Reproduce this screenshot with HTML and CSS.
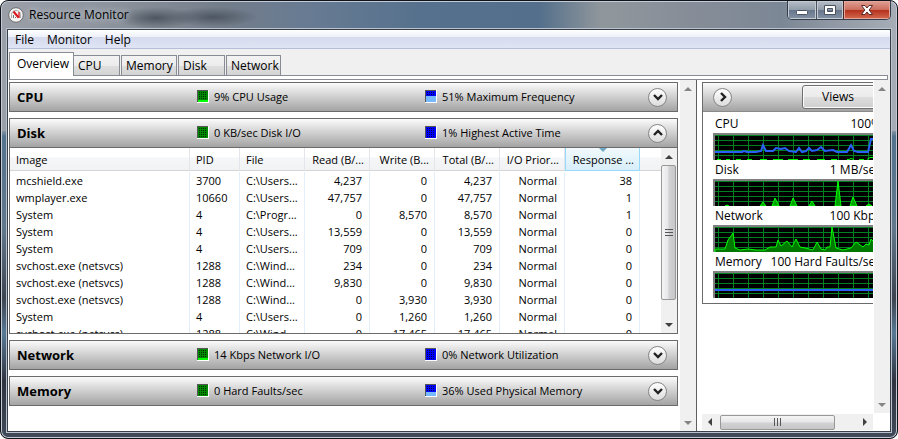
FILE: index.html
```
<!DOCTYPE html>
<html lang="en">
<head>
<meta charset="utf-8">
<title>Resource Monitor</title>
<link rel="stylesheet" href="styles.css">
</head>
<body>
<svg class="defs" aria-hidden="true">
  <defs>
    <pattern id="grid" width="15" height="5" patternUnits="userSpaceOnUse" x="5" y="2">
      <path d="M0 .5H15M.5 0V5" stroke="#008020" fill="none"/>
    </pattern>
    <symbol id="meter" viewBox="0 0 12 13">
      <path d="M0 0h12v13H0z" fill="#fff"/><path d="M0 0h11v12H0z" fill="#555"/><path d="M1 1h10v11H1z" fill="currentColor"/>
      <path d="M2 2.500h8M2 4.500h8M2 6.500h8M2 8.500h8M2 10.500h8" stroke="#000" stroke-opacity=".7" stroke-dasharray="1 1"/>
    </symbol>
    <symbol id="down" viewBox="0 0 20 20"><path d="M6 8l4 4 4-4" fill="none" stroke="#222" stroke-width="2.4"/></symbol>
    <symbol id="up" viewBox="0 0 20 20"><path d="M6 12l4-4 4 4" fill="none" stroke="#222" stroke-width="2.4"/></symbol>
    <symbol id="right" viewBox="0 0 20 20"><path d="M8 6l4 4-4 4" fill="none" stroke="#222" stroke-width="2.4"/></symbol>
  </defs>
</svg>
<div class="window">
  <header class="titlebar">
    <svg class="app-icon" width="16" height="16" viewBox="0 0 16 16" aria-hidden="true">
      <circle cx="8" cy="8" r="7.300" fill="#f4f4f4" stroke="#6b6b6b"/>
      <path d="M3.500 11V7.500a4.500 4 0 0 1 9 0V11" fill="none" stroke="#aaa" stroke-width="1"/>
      <path d="M5.500 4.500l5 6" fill="none" stroke="#d8141c" stroke-width="2"/>
      <path d="M11 5v6" fill="none" stroke="#d8141c" stroke-width="1.300"/>
      <path d="M5.500 8v3M7.500 10v1" stroke="#777"/>
    </svg>
    <h1>Resource Monitor</h1>
    <div class="controls">
      <button class="min" aria-label="Minimize"><svg width="14" height="14" viewBox="0 0 14 14"><rect x="1.500" y="7.500" width="11" height="4" rx="1" fill="#fff" stroke="#4b5361"/></svg></button>
      <button class="max" aria-label="Maximize"><svg width="14" height="14" viewBox="0 0 14 14"><path d="M1.500 2.500h11v9h-11zM4.500 5.500v3h5v-3z" fill="#fff" fill-rule="evenodd" stroke="#4b5361"/></svg></button>
      <button class="close" aria-label="Close"><svg width="14" height="14" viewBox="0 0 14 14"><path d="M1.500 2.500h3.500l2 2.500 2-2.500h3.500l-3.300 4.500 3.300 4.500h-3.500l-2-2.500-2 2.500h-3.500l3.300-4.500z" fill="#fff" stroke="#5b2a2a"/></svg></button>
    </div>
  </header>
  <div class="client">
    <nav class="menu"><button>File</button><button>Monitor</button><button>Help</button></nav>
    <div class="tabstrip">
      <div class="tabs" role="tablist">
        <button role="tab" aria-selected="true" class="tab active">Overview</button>
        <button role="tab" class="tab t-cpu">CPU</button>
        <button role="tab" class="tab t-mem">Memory</button>
        <button role="tab" class="tab t-disk">Disk</button>
        <button role="tab" class="tab t-net">Network</button>
      </div>
      <div class="tabline"></div>
    </div>
    <main class="content">
      <div class="sections">
        <section>
          <div class="bar"><h2>CPU</h2>
            <div class="stat"><svg class="meter green" viewBox="0 0 12 13"><use href="#meter" width="12" height="13"/><path d="M1 10h10v2H1z" fill="#0f0"/></svg>9% CPU Usage</div>
            <div class="stat"><svg class="meter blue" viewBox="0 0 12 13"><use href="#meter" width="12" height="13"/><path d="M1 6h10v6H1z" fill="#78b8ff"/></svg>51% Maximum Frequency</div>
            <button class="round" aria-label="Expand CPU"><svg><use href="#down"/></svg></button></div>
        </section>
        <section>
          <div class="bar"><h2>Disk</h2>
            <div class="stat"><svg class="meter green" viewBox="0 0 12 13"><use href="#meter" width="12" height="13"/></svg>0 KB/sec Disk I/O</div>
            <div class="stat"><svg class="meter blue" viewBox="0 0 12 13"><use href="#meter" width="12" height="13"/></svg>1% Highest Active Time</div>
            <button class="round" aria-label="Collapse Disk"><svg><use href="#up"/></svg></button></div>
          <div class="list">
            <div class="list-view">
            <table>
              <colgroup><col class="c-image"><col class="c-pid"><col class="c-val"><col class="c-val"><col class="c-val"><col class="c-val"><col class="c-io"><col class="c-resp"><col></colgroup>
              <thead><tr><th>Image</th><th>PID</th><th>File</th><th class="n">Read (B/...</th><th class="n">Write (B...</th><th class="n">Total (B/...</th><th class="n">I/O Prior...</th><th class="n sorted">Response ...</th><th></th></tr></thead>
              <tbody>
                <tr><td>mcshield.exe</td><td>3700</td><td>C:\Users...</td><td>4,237</td><td>0</td><td>4,237</td><td>Normal</td><td>38</td><td></td></tr>
                <tr><td>wmplayer.exe</td><td>10660</td><td>C:\Users...</td><td>47,757</td><td>0</td><td>47,757</td><td>Normal</td><td>1</td><td></td></tr>
                <tr><td>System</td><td>4</td><td>C:\Progr...</td><td>0</td><td>8,570</td><td>8,570</td><td>Normal</td><td>1</td><td></td></tr>
                <tr><td>System</td><td>4</td><td>C:\Users...</td><td>13,559</td><td>0</td><td>13,559</td><td>Normal</td><td>0</td><td></td></tr>
                <tr><td>System</td><td>4</td><td>C:\Users...</td><td>709</td><td>0</td><td>709</td><td>Normal</td><td>0</td><td></td></tr>
                <tr><td>svchost.exe (netsvcs)</td><td>1288</td><td>C:\Wind...</td><td>234</td><td>0</td><td>234</td><td>Normal</td><td>0</td><td></td></tr>
                <tr><td>svchost.exe (netsvcs)</td><td>1288</td><td>C:\Wind...</td><td>9,830</td><td>0</td><td>9,830</td><td>Normal</td><td>0</td><td></td></tr>
                <tr><td>svchost.exe (netsvcs)</td><td>1288</td><td>C:\Wind...</td><td>0</td><td>3,930</td><td>3,930</td><td>Normal</td><td>0</td><td></td></tr>
                <tr><td>System</td><td>4</td><td>C:\Users...</td><td>0</td><td>1,260</td><td>1,260</td><td>Normal</td><td>0</td><td></td></tr>
                <tr><td>svchost.exe (netsvcs)</td><td>1288</td><td>C:\Wind...</td><td>0</td><td>17,465</td><td>17,465</td><td>Normal</td><td>0</td><td></td></tr>
              </tbody>
            </table>
            </div>
            <div class="vscroll live"><button class="arrow" aria-label="Scroll up"><svg viewBox="0 0 8 8"><path d="M0 6l4-4 4 4z"/></svg></button><div class="thumb"><svg width="8" height="8" viewBox="0 0 8 8"><path d="M0 .5h8M0 3.500h8M0 6.500h8" stroke="#555"/></svg></div><button class="arrow" aria-label="Scroll down"><svg viewBox="0 0 8 8"><path d="M0 2l4 4 4-4z"/></svg></button></div>
          </div>
        </section>
        <section>
          <div class="bar"><h2>Network</h2>
            <div class="stat"><svg class="meter green" viewBox="0 0 12 13"><use href="#meter" width="12" height="13"/><path d="M1 10h10v2H1z" fill="#0f0"/></svg>14 Kbps Network I/O</div>
            <div class="stat"><svg class="meter blue" viewBox="0 0 12 13"><use href="#meter" width="12" height="13"/></svg>0% Network Utilization</div>
            <button class="round" aria-label="Expand Network"><svg><use href="#down"/></svg></button></div>
        </section>
        <section>
          <div class="bar"><h2>Memory</h2>
            <div class="stat"><svg class="meter green" viewBox="0 0 12 13"><use href="#meter" width="12" height="13"/></svg>0 Hard Faults/sec</div>
            <div class="stat"><svg class="meter blue" viewBox="0 0 12 13"><use href="#meter" width="12" height="13"/><path d="M1 8h10v4H1z" fill="#78b8ff"/></svg>36% Used Physical Memory</div>
            <button class="round" aria-label="Expand Memory"><svg><use href="#down"/></svg></button></div>
        </section>
      </div>
      <div class="vscroll idle"><button class="arrow" aria-label="Scroll up"><svg viewBox="0 0 8 8"><path d="M0 6l4-4 4 4z"/></svg></button><button class="arrow" aria-label="Scroll down"><svg viewBox="0 0 8 8"><path d="M0 2l4 4 4-4z"/></svg></button></div>
      <aside class="side">
        <div class="side-view">
          <div class="graphs">
            <div class="graphs-head"><button class="round" aria-label="Hide graphs"><svg><use href="#right"/></svg></button><button class="views">Views</button></div>
            <div class="graph"><div class="cap"><span>CPU</span><span>100%</span></div>
              <svg class="plot" viewBox="0 0 162 27"><path d="M0 0h162v27H0z" fill="#808080"/><path d="M2 2h160v25H2z"/><path d="M2 2h160v25H2z" fill="url(#grid)"/><path d="M4 26.500h4M13 26.500h4M23 26.500h5M34 26.500h5M47 26.500h7M60 26.500h10M75 26.500h10M90 26.500h7M104 26.500h8M118 26.500h6M134 26.500h2l2-1 3 1M146 26.500h5M154 26.500l3-2h5" fill="none" stroke="#0f0"/><path d="M2 19H29l2-1 3 1H43l5-1 2-6 3 6h7l3-3 5 1 4-1 4 3 7 1 3-4 3 4 4-1 3-3 3 3 5-1 4-3 4 4 8-1 4 2h10l4-7 3 6 4 1h10l3-13h6" fill="none" stroke="#2860f8" stroke-width="2"/></svg></div>
            <div class="graph"><div class="cap"><span>Disk</span><span>1 MB/sec</span></div>
              <svg class="plot" viewBox="0 0 162 27"><path d="M0 0h162v27H0z" fill="#808080"/><path d="M2 2h160v25H2z"/><path d="M2 2h160v25H2z" fill="url(#grid)"/><path d="M12 27l2-1 2 1zM47 27l3-4 3 4zM59 27l3-8 4 8zM77 27l3-8 4 8zM96 27l3-5 3 5zM122 27l3-25 3 25zM137 27l3-9 4 9zM153 27l3-2 3 2z" fill="#00a000" stroke="#0f0"/></svg></div>
            <div class="graph"><div class="cap"><span>Network</span><span>100 Kbps</span></div>
              <svg class="plot" viewBox="0 0 162 27"><path d="M0 0h162v27H0z" fill="#808080"/><path d="M2 2h160v25H2z"/><path d="M2 2h160v25H2z" fill="url(#grid)"/><path d="M2 28V24H12l3-9 3-4 2-3 2 15 5 2 8-1 8 1 9 0 5-3h6l2-7 3 6 6-5 5 6 4-8 4 8 5 1 8 2 4-8 4 7 4 1 2-3h3l2-20 4 21 7 2 8-2 5-6 7 5 3-3 3 1 2-6 4 4v13z" fill="#007800" stroke="#0f0"/></svg></div>
            <div class="graph"><div class="cap"><span>Memory</span><span>100 Hard Faults/sec</span></div>
              <svg class="plot" viewBox="0 0 162 27"><path d="M0 0h162v27H0z" fill="#808080"/><path d="M2 2h160v25H2z"/><path d="M2 2h160v25H2z" fill="url(#grid)"/><path d="M2 19H162" stroke="#2860f8" stroke-width="2"/></svg></div>
          </div>
        </div>
        <div class="vscroll idle"><button class="arrow" aria-label="Scroll up"><svg viewBox="0 0 8 8"><path d="M0 6l4-4 4 4z"/></svg></button><button class="arrow" aria-label="Scroll down"><svg viewBox="0 0 8 8"><path d="M0 2l4 4 4-4z"/></svg></button></div>
        <div class="hscroll"><button class="arrow" aria-label="Scroll left"><svg viewBox="0 0 8 8"><path d="M6 0L2 4l4 4z"/></svg></button><div class="thumb"><svg width="8" height="8" viewBox="0 0 8 8"><path d="M.5 0v8M3.500 0v8M6.500 0v8" stroke="#555"/></svg></div><button class="arrow" aria-label="Scroll right"><svg viewBox="0 0 8 8"><path d="M2 0l4 4-4 4z"/></svg></button></div>
      </aside>
    </main>
  </div>
</div>
</body>
</html>
```
FILE: styles.css
```
* { box-sizing: border-box; }
body { margin: 0; background: #fff; color: #000; font: 12px/16px "Open Sans", "Noto Sans", sans-serif; }
button { margin: 0; padding: 0; border: 0; background: none; color: inherit; font: inherit; }
h1, h2 { margin: 0; }
.defs { position: absolute; width: 0; height: 0; }

.window {
  display: flex; flex-direction: column; height: 100vh; padding: 0 6px 6px;
  border: 1px solid #10131a; border-radius: 8px; box-shadow: inset 0 0 0 1px #c3ccd6;
  background:
    radial-gradient(ellipse 40px 11px at 155px 17px, #4d5661 0, transparent 100%) no-repeat,
    radial-gradient(ellipse 45px 10px at 212px 16px, #4d5661 0, transparent 100%) no-repeat,
    linear-gradient(90deg, #9a9fa8 0, #8d939c 12%, #737d8a 25%, #687b93 34%, #56718d 47%, #536f8b 60%, #90979c 67%, #868d98 77%, #7c8795 87%, #a6adb6 100%) top / 100% 130px no-repeat,
    linear-gradient(#8d96a2 0, #a0a7b0 29%, #54738d 31%, #61788c 52%, #3d4450 68%, #587994 76%, #30343f 87%, #404a59 100%);
}
.titlebar { display: flex; align-items: center; height: 28px; flex: none; padding-left: 1px; }
.app-icon { flex: none; }
.titlebar h1 { flex: 1; margin-left: 5px; font-size: 12px; font-weight: 400; text-shadow: 0 0 6px #c5cbd2, 0 0 10px #b5bcc5; }
.controls { display: flex; align-self: flex-start; height: 19px; border: 1px solid #343c49; border-top: 0; border-radius: 0 0 5px 5px; overflow: hidden; }
.controls button { display: flex; align-items: center; justify-content: center; box-shadow: inset 0 0 0 1px #c4cad2; background: linear-gradient(#b5bdc7 0, #929dab 48%, #66758a 50%, #8492a5 100%); }
.controls .min { width: 28px; }
.controls .max { width: 27px; border-left: 1px solid #4b5361; }
.controls .close { width: 47px; border-left: 1px solid #4b2524; box-shadow: inset 0 0 0 1px #e5a79b; background: linear-gradient(#dfa095 0, #cd6f5e 48%, #b3301b 50%, #d66a50 100%); }

.client { flex: 1; min-height: 0; display: flex; flex-direction: column; border: 1px solid #383f49; background: #fff; box-shadow: 0 0 0 1px #b9c3cd; }
.menu { display: flex; flex: none; gap: 13px; height: 19px; padding: 2px 0 0 7px; border-bottom: 1px solid #b6bfd8; background: linear-gradient(#fff 0, #eef1f9 36%, #d5dbed 42%, #dfe5f5 100%); }

.tabstrip { flex: none; background: #f0f0f0; padding: 3px 2px 0 1px; }
.tabs { display: flex; align-items: flex-end; height: 23px; }
.tab { height: 21px; padding: 0 0 0 4px; margin: 0 1px -1px 0; text-align: left; white-space: nowrap; border: 1px solid #898c95; background: linear-gradient(#f3f3f3 0, #ececec 50%, #dedede 52%, #d4d4d4 100%); }
.tab.active { height: 24px; width: 65px; padding: 0 0 2px 7px; margin-right: 0; border-bottom: 0; background: #fff; }
.tab.t-cpu { width: 46px; border-left: 0; }
.t-mem { width: 56px; }
.t-disk { width: 47px; }
.t-net { width: 55px; }
.tabline { height: 5px; border: 1px solid #898c95; background: #fff; }

.content { flex: 1; min-height: 0; display: flex; }
.sections { flex: 1; min-width: 0; display: flex; flex-direction: column; gap: 6px; padding: 2px 2px 0 1px; font-size: 11px; overflow: hidden; }
.bar { display: grid; grid-template-columns: 180px 228px 1fr auto; align-items: center; height: 30px; padding: 0 10px 0 7px; border: 1px solid #6b6b6b; background: linear-gradient(#fbfbfb 0, #dcdcdc 35%, #a3a3a3 100%); }
.bar h2 { font-size: 13px; font-weight: 700; }
.stat { display: flex; align-items: center; gap: 5px; white-space: nowrap; }
.meter { width: 12px; height: 13px; flex: none; margin-bottom: 1px; }
.green { color: #008a00; }
.blue { color: #00f; }
.round { width: 19px; height: 19px; border: 1px solid #858585; border-radius: 50%; background: linear-gradient(#fff, #dcdcdc); display: flex; align-items: center; justify-content: center; }
.round svg { width: 20px; height: 20px; flex: none; }

.list { display: flex; height: 186px; border: 1px solid #6b6b6b; border-top: 0; overflow: hidden; }
.list-view { flex: 1; min-width: 0; overflow: hidden; }
table { width: 100%; table-layout: fixed; border-collapse: separate; border-spacing: 0; }
.c-image { width: 180px; }
.c-pid { width: 50px; }
.c-val { width: 65px; }
.c-io { width: 65px; }
.c-resp { width: 75px; }
th { height: 23px; padding: 2px 6px 0 6px; text-align: left; font-weight: 400; white-space: nowrap; border-right: 1px solid #e2e6ec; border-bottom: 1px solid #d5d5d5; background: linear-gradient(#fff 0, #fff 42%, #f5f6f8 44%, #f1f2f4 100%); }
th.n { text-align: right; padding-left: 0; padding-right: 5px; }
th.sorted { position: relative; border-left: 1px solid #96d9f9; border-right-color: #96d9f9; border-bottom-color: #96d9f9; background: linear-gradient(#f2fafd 0, #e6f5fb 42%, #d8eefa 100%); }
th.sorted::before { content: ""; position: absolute; top: 0; left: 50%; margin-left: -4px; border: 4px solid transparent; border-top-color: #6fa8c4; border-bottom: 0; }
th:last-child, td:last-child { border-right: 0; }
tbody::before { content: ""; display: block; height: 1px; }
td { height: 17px; padding: 0 7px 0 6px; line-height: 17px; white-space: nowrap; border-right: 1px solid #e3effb; text-align: right; }
td:nth-child(-n+3) { text-align: left; padding-right: 0; }

.vscroll { display: flex; flex-direction: column; flex: none; width: 16px; background: #f0f0f0; }
.vscroll.idle { justify-content: space-between; }
.arrow { display: flex; align-items: center; justify-content: center; width: 16px; height: 17px; flex: none; }
.arrow svg { width: 8px; height: 8px; fill: #404040; }
.idle .arrow svg { fill: #858585; }
.thumb { display: flex; align-items: center; justify-content: center; flex: none; border: 1px solid #989898; border-radius: 2px; }
.vscroll .thumb { width: 15px; height: 135px; background: linear-gradient(90deg, #f5f5f5 0, #e6e6e9 48%, #d2d2d5 52%, #c7c7ca 100%); }
.vscroll.live .arrow:last-child { margin-top: auto; }

.side { flex: none; width: 194px; display: grid; grid-template-columns: 1fr 16px; grid-template-rows: 1fr 18px; border-left: 1px solid #5f5f5f; }
.side-view { overflow: hidden; min-width: 0; margin-right: 1px; padding: 2px 0 0 5px; }
.graphs { width: 186px; border: 1px solid #6b6b6b; padding-bottom: 5px; }
.graphs-head { display: flex; align-items: center; justify-content: space-between; height: 29px; margin-bottom: 2px; padding-left: 10px; border-bottom: 1px solid #8a8a8a; background: linear-gradient(#fbfbfb 0, #dcdcdc 35%, #a3a3a3 100%); }
.views { width: 85px; height: 24px; padding-left: 19px; text-align: left; border: 1px solid #707070; border-radius: 3px; background: linear-gradient(#f2f2f2 0, #ebebeb 48%, #dddddd 52%, #cfcfcf 100%); box-shadow: inset 0 0 0 1px #fbfbfb; }
.graph { padding-left: 10px; }
.cap { display: flex; justify-content: space-between; height: 19px; padding: 2px 6px 0 2px; white-space: nowrap; }
.plot { display: block; width: 162px; height: 27px; }
.hscroll { display: flex; align-items: center; height: 16px; margin: 1px 1px 0 5px; background: #f0f0f0; }
.hscroll .thumb { width: 115px; height: 15px; margin-left: 2px; background: linear-gradient(#f5f5f5 0, #e6e6e9 48%, #d2d2d5 52%, #c7c7ca 100%); }
.hscroll .arrow:last-child { margin-left: auto; }
```
